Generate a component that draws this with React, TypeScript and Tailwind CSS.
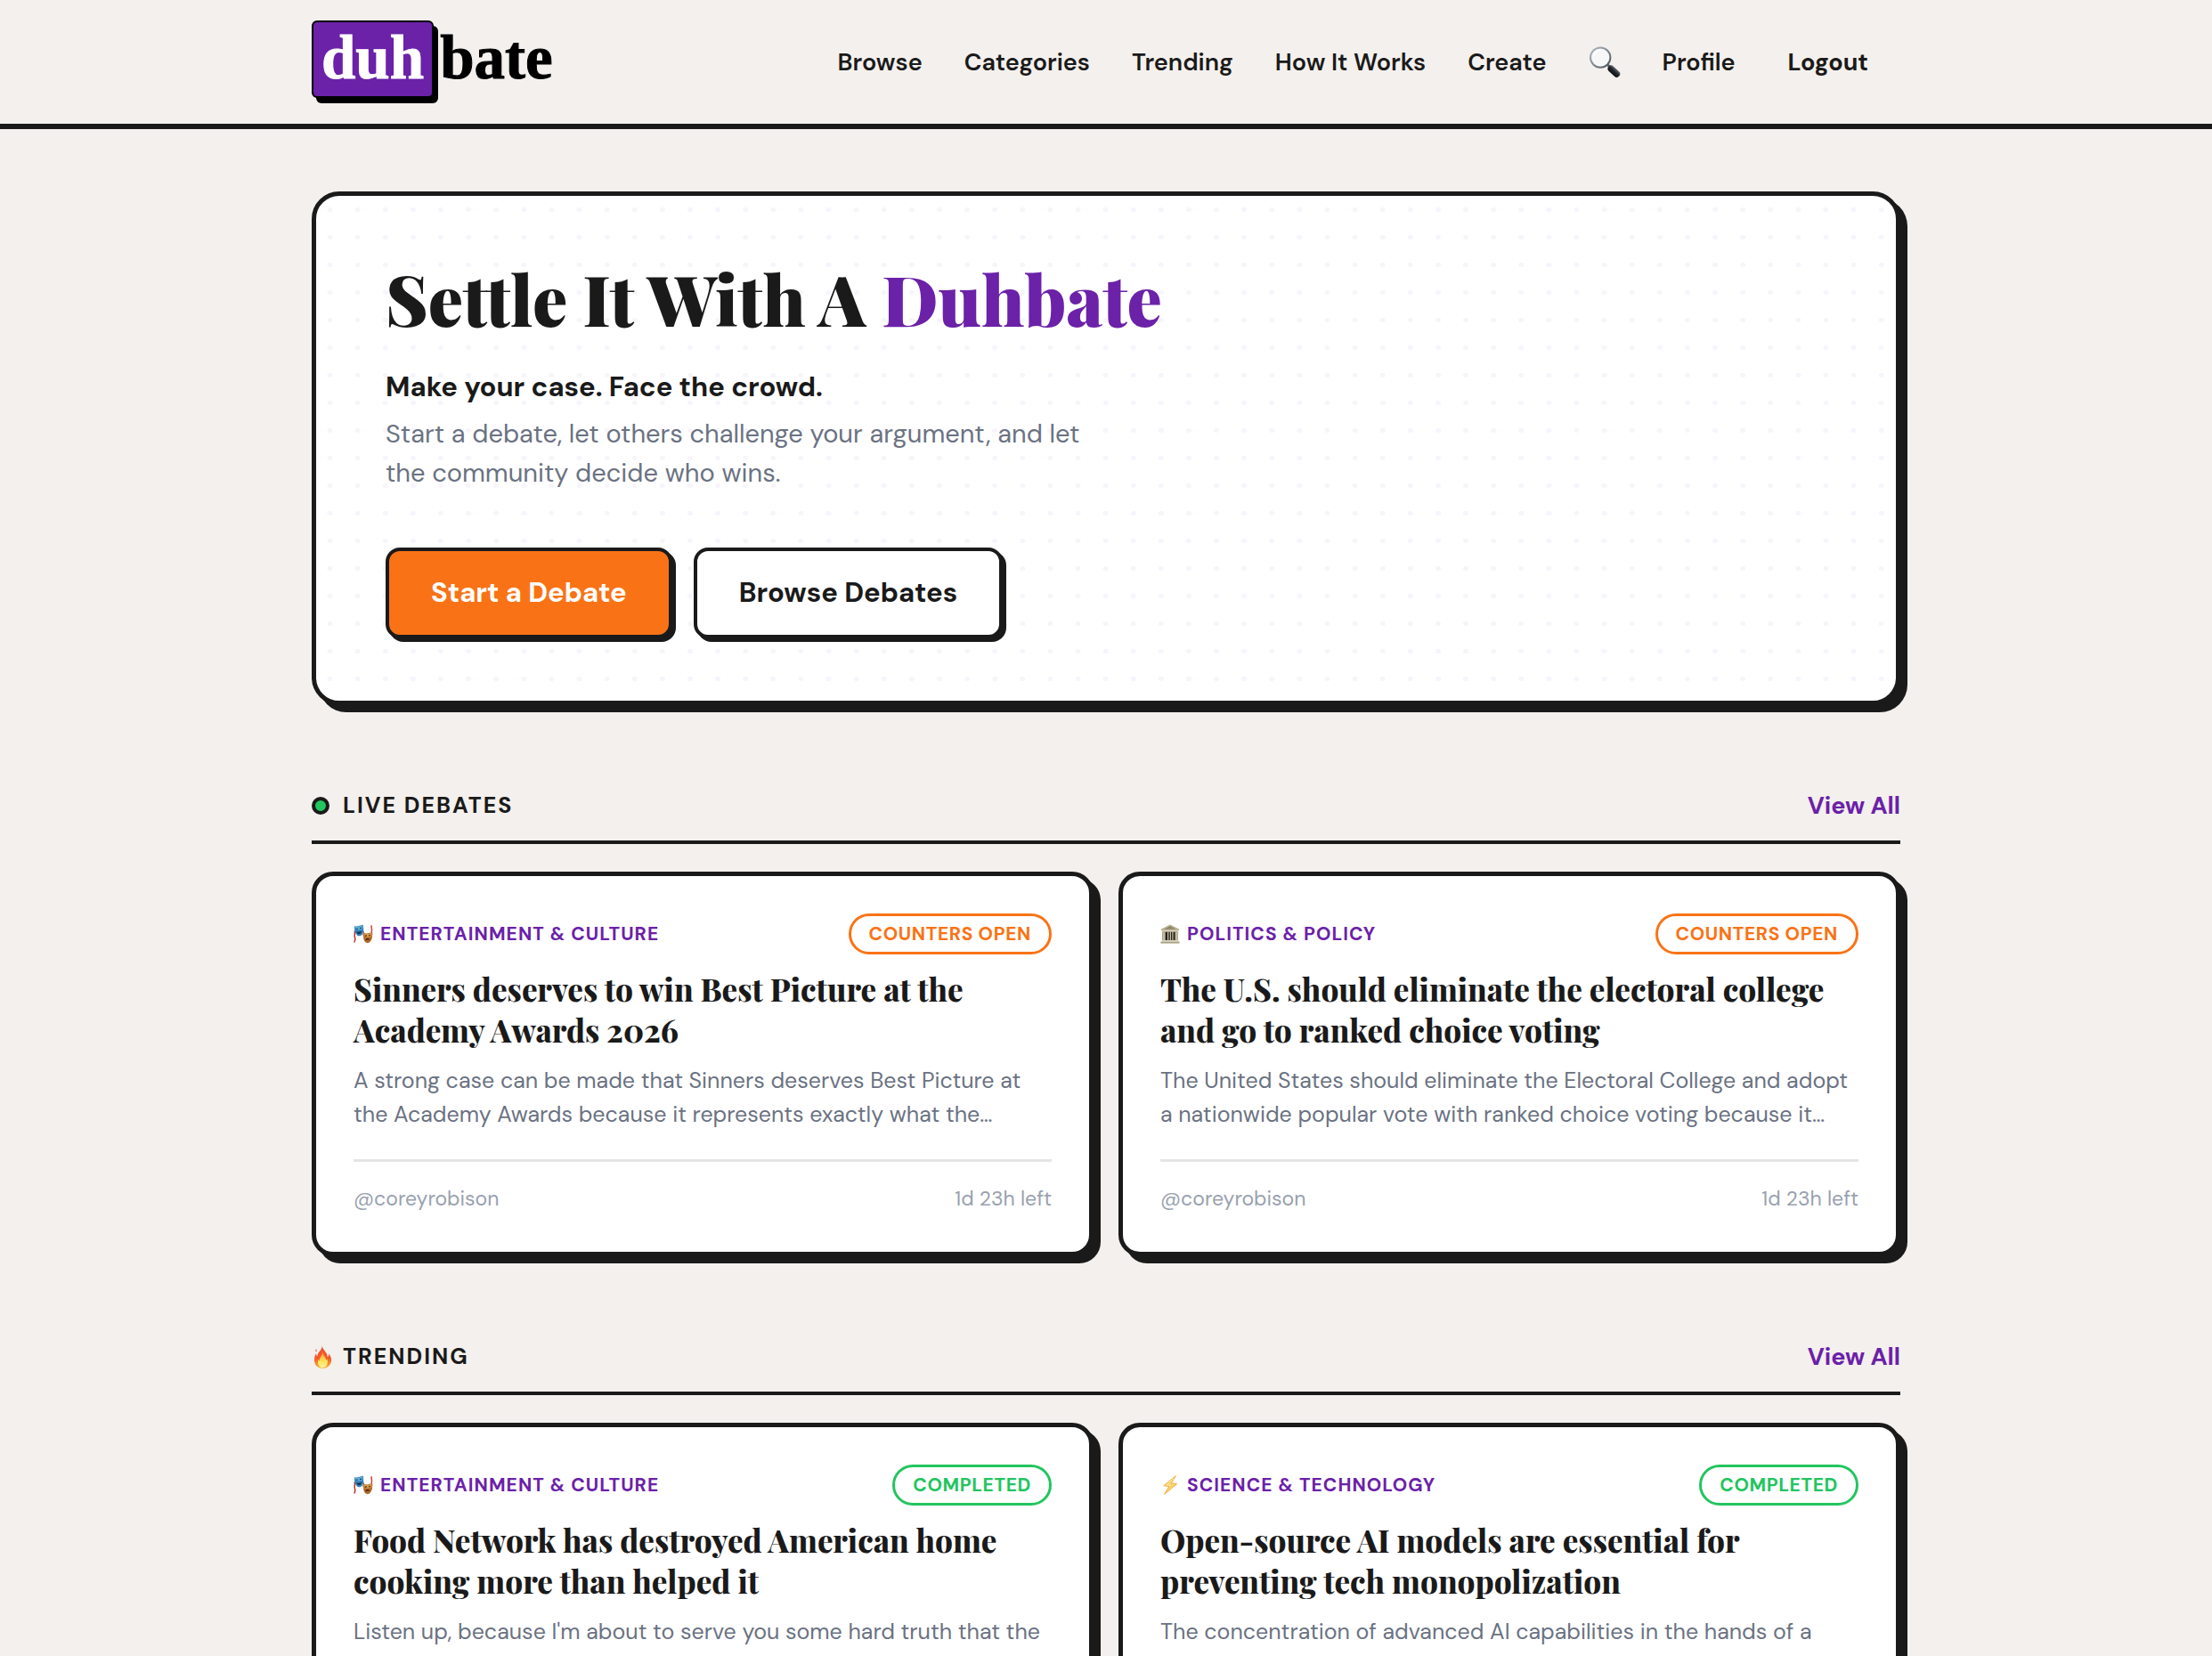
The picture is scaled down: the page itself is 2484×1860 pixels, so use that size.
import { ReactNode } from 'react';
import clsx from 'clsx';

interface Debate {
  id: string;
  category: string;
  icon: ReactNode;
  status: 'open' | 'completed';
  title: string;
  excerpt: string;
  author?: string;
  timeLeft?: string;
}

const statusLabels = {
  open: 'Counters open',
  completed: 'Completed',
};

const navLinks = ['Browse', 'Categories', 'Trending', 'How It Works', 'Create'];

function SearchIcon() {
  return (
    <svg viewBox="0 0 36 36" className="size-9" aria-hidden="true">
      <defs>
        <linearGradient id="rim" x1="0" y1="0" x2="1" y2="1">
          <stop offset="0" stopColor="#b4bcc6" />
          <stop offset="0.5" stopColor="#7f8993" />
          <stop offset="1" stopColor="#4b545c" />
        </linearGradient>
        <linearGradient id="handle" x1="0" y1="1" x2="1" y2="0">
          <stop offset="0" stopColor="#0b0d10" />
          <stop offset="0.55" stopColor="#23272b" />
          <stop offset="1" stopColor="#6c747c" />
        </linearGradient>
      </defs>
      <path d="M21 20.5l3.500 3.500" stroke="#59626a" strokeWidth="3" />
      <circle cx="13.2" cy="12.6" r="11.2" fill="#f7f7f8" stroke="url(#rim)" strokeWidth="2" />
      <path d="M5.500 10.500a8.400 8.400 0 0 1 7-6" fill="none" stroke="#fff" strokeWidth="1.6" strokeLinecap="round" />
      <path d="M25.200 25.200l6.300 5.800" stroke="url(#handle)" strokeWidth="7.400" strokeLinecap="round" />
    </svg>
  );
}

function MasksIcon() {
  return (
    <svg viewBox="0 0 22 22" className="size-[22px]" aria-hidden="true">
      <path d="M1.200 7.500c1 3-.8 5 .3 7.500s-.2 3.500-.7 5.500" fill="none" stroke="#b5352f" strokeWidth="1.500" />
      <path d="M11 8c.8 2-.2 3.500.2 5" fill="none" stroke="#b5352f" strokeWidth="1.200" />
      <path d="M20.300 1.200c-1 2.300.9 4 .1 6.300-.4 1.400.4 2.500.1 4.500" fill="none" stroke="#c8453a" strokeWidth="1.500" />
      <path d="M.8 2.200C3 2.700 7.500 2.300 10.500.6c.9 3.700 1.400 7.600-.4 10.400-1 1.600-2.600 2.400-4.200 2.300C2.600 12.600.7 7.500.8 2.200z" fill="#2f7fb8" />
      <path d="M1.500 2.900c2.300.3 5.600 0 8.400-1.300.3 1.400.5 2.700.5 4C7.500 6.700 4.500 6.800 1.800 6c-.2-1-.3-2-.3-3.100z" fill="#5fb0dc" />
      <path d="M2.500 5.300l2.400-.3M6.900 4.700l2.200-.7" stroke="#12344f" strokeWidth="1.100" />
      <path d="M3.400 8.400c2 .7 4 .4 5.600-.7-.2 2-1.300 3.300-2.700 3.400-1.300.1-2.400-1-2.900-2.700z" fill="#12344f" />
      <path d="M11.200 9.800c2.800 1 6.500.8 9.600-1 .8 4 .4 8-1.700 10.400-1.200 1.500-2.800 2.200-4.200 1.900-3.200-.7-4.400-6-3.700-11.300z" fill="#b0682a" />
      <path d="M11.700 10.600c2.700.8 5.800.6 8.600-.8.300 1.400.4 2.800.3 4-3 1-6.200 1.100-9 .3 0-1.200 0-2.400.1-3.500z" fill="#d99a4c" />
      <path d="M12.700 13.400l2.300-.6M17 12.700l2.300.1" stroke="#4b2408" strokeWidth="1.100" />
      <path d="M13.200 18.300c.6-1.800 1.600-2.500 2.700-2.500 1.200 0 1.900.7 2.400 2-1.600-.6-3.400-.4-5.100.5z" fill="#4b2408" />
    </svg>
  );
}

function BuildingIcon() {
  return (
    <svg viewBox="0 0 22 22" className="size-[22px]" aria-hidden="true">
      <path d="M2.500 8h17v10h-17z" fill="#25231c" />
      <path d="M11 .6l10 4.800v1.800H1V5.400z" fill="#b9b193" />
      <path d="M11 2.300l6.500 3.100h-13z" fill="#8b8468" />
      <path d="M1.600 7.200h18.800v1.500H1.600z" fill="#d9d2b8" />
      <path d="M2.600 8.700h3v9.500h-3zM8 8.700h1.300v9.500H8zM10.700 8.700H12v9.500h-1.300zM13.300 8.700h1.300v9.500h-1.300zM16.600 8.700h3v9.500h-3z" fill="#c4bc9e" />
      <path d="M1.500 18h19v1.600h-19z" fill="#d9d2b8" />
      <path d="M.4 19.600h21.200v2H.4z" fill="#aaa284" />
    </svg>
  );
}

function BoltIcon() {
  return (
    <svg viewBox="0 0 22 22" className="size-[22px]" aria-hidden="true">
      <path d="M17.300.6L3.800 11.800l6 .7-5.300 9L18.600 9.600l-6.300-.7z" fill="#fbd36b" stroke="#f0a63a" strokeWidth="0.900" strokeLinejoin="round" />
      <path d="M15 3.500l-8 7.300 4.800.6" fill="none" stroke="#fff0ba" strokeWidth="1" />
    </svg>
  );
}

function FireIcon() {
  return (
    <svg viewBox="0 0 25 26" className="h-[26px] w-[25px]" aria-hidden="true">
      <defs>
        <linearGradient id="flame" x1="0" y1="0" x2="0" y2="1">
          <stop offset="0" stopColor="#f0502a" />
          <stop offset="0.55" stopColor="#f4592a" />
          <stop offset="1" stopColor="#fdb52f" />
        </linearGradient>
        <linearGradient id="flame-core" x1="0" y1="0" x2="0" y2="1">
          <stop offset="0" stopColor="#fd9a33" />
          <stop offset="0.6" stopColor="#ffe45a" />
          <stop offset="1" stopColor="#fff3a0" />
        </linearGradient>
      </defs>
      <path
        d="M11.800.4c.2 3.600 3.700 6 5.200 9.300.5 1.100.7 2.300.6 3.600 1.200-.8 1.700-2.200 1.700-3.900 2 2.600 3 5.400 2.700 8.300-.5 4.800-4.400 8-9.600 8.100C7 25.700 3.300 22.200 3 17.200c-.2-3 .7-5.800 2.100-8.200 0 1.500.4 2.700 1.300 3.600C6.200 7.500 11.500 6.100 11.800.4z"
        fill="url(#flame)"
      />
      <path d="M4.800 4.200c.9.700 1.100 2 .4 3.400-1.100-1-1.100-2.400-.4-3.400z" fill="#f0553a" />
      <path
        d="M12.300 7.500c.2 3.600 3.400 5.600 4 9.200.5-.5.800-1.100.9-1.800 2 5.200-.3 10-4.700 10.100-4.300 0-6.700-4.200-5-9.300.2.800.6 1.400 1.200 1.800-.2-3.600 3.300-5.800 3.600-10z"
        fill="url(#flame-core)"
      />
    </svg>
  );
}

const liveDebates: Debate[] = [
  {
    id: '1',
    category: 'Entertainment & Culture',
    icon: <MasksIcon />,
    status: 'open',
    title: 'Sinners deserves to win Best Picture at the Academy Awards 2026',
    excerpt:
      'A strong case can be made that Sinners deserves Best Picture at the Academy Awards because it represents exactly what the…',
    author: '@coreyrobison',
    timeLeft: '1d 23h left',
  },
  {
    id: '2',
    category: 'Politics & Policy',
    icon: <BuildingIcon />,
    status: 'open',
    title: 'The U.S. should eliminate the electoral college and go to ranked choice voting',
    excerpt:
      'The United States should eliminate the Electoral College and adopt a nationwide popular vote with ranked choice voting because it…',
    author: '@coreyrobison',
    timeLeft: '1d 23h left',
  },
];

const trendingDebates: Debate[] = [
  {
    id: '3',
    category: 'Entertainment & Culture',
    icon: <MasksIcon />,
    status: 'completed',
    title: 'Food Network has destroyed American home cooking more than helped it',
    excerpt: "Listen up, because I'm about to serve you some hard truth that the",
  },
  {
    id: '4',
    category: 'Science & Technology',
    icon: <BoltIcon />,
    status: 'completed',
    title: 'Open-source AI models are essential for preventing tech monopolization',
    excerpt: 'The concentration of advanced AI capabilities in the hands of a',
  },
];

function Header() {
  return (
    <header className="border-b-[6px] border-[#1a1a1a]">
      <div className="mx-auto flex max-w-[1784px] items-center justify-between py-[23px]">
        <a
          href="#"
          className="flex h-[93px] items-start gap-[7px] font-['Liberation_Serif',serif] text-[69px] leading-[80px] font-bold text-black [-webkit-text-stroke:1px]"
        >
          <span className="h-[87px] rounded-md border-2 border-black bg-[#6b21a8] px-[9px] text-white shadow-[5px_6px_0_#000]">
            duh
          </span>
          <span className="pt-[2px]">bate</span>
        </a>
        <nav className="flex items-center gap-[47px] pr-9 text-[27px] leading-10 font-semibold">
          {navLinks.map((label) => (
            <a key={label} href="#">
              {label}
            </a>
          ))}
          <button type="button" aria-label="Search">
            <SearchIcon />
          </button>
          <a href="#">Profile</a>
          <button type="button" className="ml-3 font-bold">
            Logout
          </button>
        </nav>
      </div>
    </header>
  );
}

function Hero() {
  return (
    <section className="rounded-[31px] border-[5px] border-[#1a1a1a] bg-white bg-[radial-gradient(circle,#f7f5fb_3px,transparent_3px)] bg-[size:31px_31px] [background-repeat:round_repeat] px-[78px] pt-[72px] pb-[70px] shadow-[8px_8px_0_#1a1a1a]">
      <h1 className="font-['Playfair_Display','Liberation_Serif',serif] text-[78px] leading-[86px] font-black">
        Settle It With A <span className="text-[#6b21a8]">Duhbate</span>
      </h1>
      <p className="mt-[35px] text-[31px] leading-[44px] font-bold">Make your case. Face the crowd.</p>
      <p className="mt-2 max-w-[820px] text-[29px] leading-[44px] text-gray-500">
        Start a debate, let others challenge your argument, and let the community decide who wins.
      </p>
      <div className="mt-[62px] flex gap-6 text-[31px] leading-[44px] font-bold">
        <button
          type="button"
          className="rounded-2xl border-4 border-[#1a1a1a] bg-[#f97316] px-[47px] py-[25px] text-white shadow-[4px_4px_0_#1a1a1a]"
        >
          Start a Debate
        </button>
        <button
          type="button"
          className="rounded-2xl border-4 border-[#1a1a1a] bg-white px-[47px] py-[25px] shadow-[4px_4px_0_#1a1a1a]"
        >
          Browse Debates
        </button>
      </div>
    </section>
  );
}

function DebateCard({ debate }: { debate: Debate }) {
  return (
    <article className="rounded-3xl border-[5px] border-[#1a1a1a] bg-white p-[42px] shadow-[8px_8px_0_#1a1a1a]">
      <div className="flex items-center justify-between text-[21px] leading-10 font-bold uppercase">
        <span className="flex items-center gap-2 tracking-[0.05em] text-[#6b21a8]">
          {debate.icon}
          {debate.category}
        </span>
        <span
          className={clsx(
            'rounded-full border-[3px] px-5 tracking-[0.03em]',
            debate.status === 'open' ? 'border-[#f97316] text-[#f97316]' : 'border-[#22c55e] text-[#22c55e]',
          )}
        >
          {statusLabels[debate.status]}
        </span>
      </div>
      <h3 className="mt-4 font-['Playfair_Display','Liberation_Serif',serif] text-[35px] leading-[46px] font-extrabold">
        {debate.title}
      </h3>
      <p className="mt-[15px] text-[25px] leading-[38px] text-gray-500">{debate.excerpt}</p>
      {debate.author && (
        <div className="mt-[31px] flex justify-between border-t-[3px] border-[#e5e5e3] pt-[23px] text-[23px] leading-9 text-gray-400">
          <span>{debate.author}</span>
          <span>{debate.timeLeft}</span>
        </div>
      )}
    </article>
  );
}

interface DebateSectionProps {
  title: string;
  marker: ReactNode;
  debates: Debate[];
}

function DebateSection({ title, marker, debates }: DebateSectionProps) {
  return (
    <section className="mt-[94px]">
      <div className="flex items-center justify-between border-b-4 border-[#1a1a1a] pb-5 leading-[38px]">
        <h2 className="flex items-center text-[25px] font-bold tracking-[0.08em] uppercase">
          <span className="flex w-[35px]">{marker}</span>
          {title}
        </h2>
        <a href="#" className="text-[27px] font-bold text-[#6b21a8]">
          View All
        </a>
      </div>
      <div className="mt-[31px] grid grid-cols-2 gap-7">
        {debates.map((debate) => (
          <DebateCard key={debate.id} debate={debate} />
        ))}
      </div>
    </section>
  );
}

export default function App() {
  return (
    <div className="min-h-screen bg-[#f4f0ed] font-['DM_Sans','Inter',sans-serif] text-[#1a1a1a]">
      <Header />
      <main className="mx-auto max-w-[1784px] pt-[70px]">
        <Hero />
        <DebateSection
          title="Live debates"
          marker={<span className="size-5 rounded-full border-4 border-[#1a1a1a] bg-[#22c55e]" />}
          debates={liveDebates}
        />
        <DebateSection title="Trending" marker={<FireIcon />} debates={trendingDebates} />
      </main>
    </div>
  );
}
